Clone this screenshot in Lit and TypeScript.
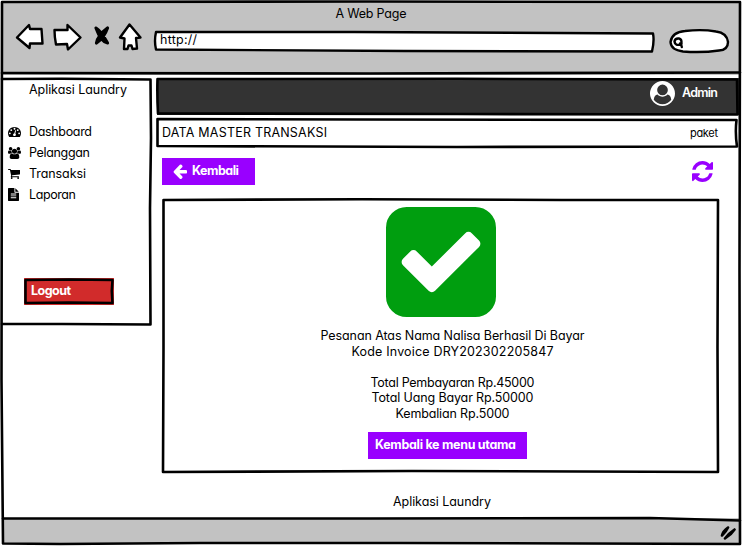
import { LitElement, html, css, svg } from "lit";
import { customElement, property } from "lit/decorators.js";

const ICONS: Record<string, { box: string; d: string }> = {
  dashboard: {
    box: "0 128 1792 1536",
    d: "M384 1152q0-53-37.5-90.5t-90.5-37.5-90.5 37.5-37.5 90.5 37.5 90.5 90.5 37.5 90.5-37.5 37.5-90.5zm192-448q0-53-37.5-90.5t-90.5-37.5-90.5 37.5-37.5 90.5 37.5 90.5 90.5 37.5 90.5-37.5 37.5-90.5zm428 481l101-382q6-26-7.5-48.5t-38.5-29.5-48 6.5-30 39.5l-101 382q-60 5-107 43.5t-63 98.5q-20 77 20 146t117 89 146-20 89-117q16-60-6-117t-72-91zm660-33q0-53-37.5-90.5t-90.5-37.5-90.5 37.5-37.5 90.5 37.5 90.5 90.5 37.5 90.5-37.5 37.5-90.5zm-640-640q0-53-37.5-90.5t-90.5-37.5-90.5 37.5-37.5 90.5 37.5 90.5 90.5 37.5 90.5-37.5 37.5-90.5zm448 192q0-53-37.5-90.5t-90.5-37.5-90.5 37.5-37.5 90.5 37.5 90.5 90.5 37.5 90.5-37.5 37.5-90.5zm320 448q0 261-141 483-19 29-54 29h-1402q-35 0-54-29-141-221-141-483 0-182 71-348t191-286 286-191 348-71 348 71 286 191 191 286 71 348z",
  },
  group: {
    box: "-64 0 1920 1792",
    d: "M529 896q-162 5-265 128h-134q-82 0-138-40.5t-56-118.5q0-353 124-353 6 0 43.5 21t97.5 42.5 119 21.5q67 0 133-23-5 37-5 66 0 139 81 256zm1071 637q0 120-73 189.5t-194 69.5h-874q-121 0-194-69.5t-73-189.5q0-53 3.5-103.5t14-109 26.5-108.5 43-97.5 62-81 85.5-53.5 111.5-20q10 0 43 21.5t73 48 107 48 135 21.5 135-21.5 107-48 73-48 43-21.5q61 0 111.5 20t85.5 53.5 62 81 43 97.5 26.5 108.5 14 109 3.5 103.5zm-1024-1277q0 106-75 181t-181 75-181-75-75-181 75-181 181-75 181 75 75 181zm704 384q0 159-112.5 271.5t-271.5 112.5-271.5-112.5-112.5-271.5 112.5-271.5 271.5-112.5 271.5 112.5 112.5 271.5zm576 225q0 78-56 118.5t-138 40.5h-134q-103-123-265-128 81-117 81-256 0-29-5-66 66 23 133 23 59 0 119-21.5t97.5-42.5 43.5-21q124 0 124 353zm-128-609q0 106-75 181t-181 75-181-75-75-181 75-181 181-75 181 75 75 181z",
  },
  cart: {
    box: "64 256 1664 1408",
    d: "M704 1536q0 52-38 90t-90 38-90-38-38-90 38-90 90-38 90 38 38 90zm896 0q0 52-38 90t-90 38-90-38-38-90 38-90 90-38 90 38 38 90zm128-1088v512q0 24-16.5 42.5t-40.5 21.5l-1044 122q13 60 13 70 0 16-24 64h920q26 0 45 19t19 45-19 45-45 19h-1024q-26 0-45-19t-19-45q0-11 8-31.5t16-36 21.5-40 15.5-29.5l-177-823h-204q-26 0-45-19t-19-45 19-45 45-19h256q16 0 28.5 6.5t19.5 15.5 13 24.5 8 26 5.5 29.5 4.5 26h1201q26 0 45 19t19 45z",
  },
  file: {
    box: "128 0 1536 1792",
    d: "M1596 476q14 14 28 36h-472v-472q22 14 36 28zm-476 164h544v1056q0 40-28 68t-68 28h-1344q-40 0-68-28t-28-68v-1600q0-40 28-68t68-28h800v544q0 40 28 68t68 28zm160 736v-64q0-14-9-23t-23-9h-704q-14 0-23 9t-9 23v64q0 14 9 23t23 9h704q14 0 23-9t9-23zm0-256v-64q0-14-9-23t-23-9h-704q-14 0-23 9t-9 23v64q0 14 9 23t23 9h704q14 0 23-9t9-23zm0-256v-64q0-14-9-23t-23-9h-704q-14 0-23 9t-9 23v64q0 14 9 23t23 9h704q14 0 23-9t9-23z",
  },
  back: {
    box: "128 128 1536 1600",
    d: "M1664 896v128q0 53-32.5 90.5t-84.5 37.5h-704l293 294q38 36 38 90t-38 90l-75 76q-37 37-90 37-52 0-91-37l-651-652q-37-37-37-90 0-52 37-91l651-650q38-38 91-38 52 0 90 38l75 74q38 38 38 91t-38 91l-293 293h704q52 0 84.5 37.5t32.5 90.5z",
  },
  refresh: {
    box: "128 128 1536 1536",
    d: "M1639 1056q0 5-1 7-64 268-268 434.5t-478 166.5q-146 0-282.5-55t-243.5-157l-129 129q-19 19-45 19t-45-19-19-45v-448q0-26 19-45t45-19h448q26 0 45 19t19 45-19 45l-137 137q71 66 161 102t187 36q134 0 250-65t186-179q11-17 53-117 8-23 30-23h192q13 0 22.5 9.5t9.5 22.5zm25-800v448q0 26-19 45t-45 19h-448q-26 0-45-19t-19-45 19-45l138-138q-148-137-349-137-134 0-250 65t-186 179q-11 17-53 117-8 23-30 23h-199q-13 0-22.5-9.5t-9.5-22.5v-7q65-268 270-434.5t480-166.5q146 0 284 55.5t245 156.5l130-129q19-19 45-19t45 19 19 45z",
  },
  check: {
    box: "128 128 1536 1536",
    d: "M813 1299l614-614q19-19 19-45t-19-45l-102-102q-19-19-45-19t-45 19l-467 467-211-211q-19-19-45-19t-45 19l-102 102q-19 19-19 45t19 45l358 358q19 19 45 19t45-19zm851-883v960q0 119-84.5 203.5t-203.5 84.5h-960q-119 0-203.5-84.5t-84.5-203.5v-960q0-119 84.5-203.5t203.5-84.5h960q119 0 203.5 84.5t84.5 203.5z",
  },
  user: {
    box: "0 0 1792 1792",
    d: "M1523 1339q-22-155-87.5-257.5t-184.5-118.5q-67 74-159.5 115.5t-195.5 41.5-195.5-41.5-159.5-115.5q-119 16-184.5 118.5t-87.5 257.5q106 150 271 237.5t356 87.5 356-87.5 271-237.5zm-243-699q0-159-112.5-271.5t-271.5-112.5-271.5 112.5-112.5 271.5 112.5 271.5 271.5 112.5 271.5-112.5 112.5-271.5zm512 256q0 182-71 347.5t-190.5 286-285.5 191.5-349 71-348.5-71-286-191-191-286-71.5-348 71-348 191-286 286-191 348-71 348 71 286 191 191 286 71 348z",
  },
};

const icon = (name: string, w: number, h: number) => html`
  <svg class="icon" width=${w} height=${h} viewBox=${ICONS[name].box} preserveAspectRatio="none" fill="currentColor">
    <path d=${ICONS[name].d} />
  </svg>
`;

/* Hand-drawn outline laid over the box that holds it. */
const outline = (w: number, h: number, ...paths: string[]) => html`
  <svg class="outline" width=${w} height=${h} viewBox="0 0 ${w} ${h}">
    ${paths.map((d) => svg`<path d=${d} />`)}
  </svg>
`;

/* One line of text whose tracking is spread to fill a set width. */
@customElement("fit-text")
export class FitText extends LitElement {
  @property({ type: Number }) width = 0;
  @property() text = "";

  static styles = css`
    :host {
      display: block;
      flex: none;
      white-space: pre;
    }
    .run {
      display: inline-block;
    }
  `;

  protected updated() {
    const run = this.renderRoot.querySelector(".run") as HTMLElement;
    run.style.letterSpacing = "0";
    const gap = (this.width - run.getBoundingClientRect().width) / (this.text.length - 1);
    run.style.letterSpacing = `${gap.toFixed(3)}px`;
    this.style.width = `${this.width}px`;
  }

  render() {
    return html`<span class="run">${this.text}</span>`;
  }
}

const text = (t: string, width: number) => html`<fit-text .text=${t} .width=${width}></fit-text>`;

@customElement("app-root")
export class AppRoot extends LitElement {
  static styles = css`
    :host {
      display: block;
      width: 742px;
      height: 546px;
      overflow: hidden;
      background: #fff;
      color: #000;
      font: 12.5px/18px Inter, "Noto Sans", sans-serif;
      font-feature-settings: "cv11", "calt" 0;
    }
    * {
      box-sizing: border-box;
    }
    .icon {
      display: block;
      flex: none;
    }
    .outline {
      position: absolute;
      left: 0;
      top: 0;
      overflow: visible;
      fill: none;
      stroke: #000;
      stroke-width: 2.6;
      stroke-linecap: round;
      stroke-linejoin: round;
      pointer-events: none;
    }
    .window {
      position: relative;
      display: flex;
      flex-direction: column;
      height: 546px;
    }
    .chrome {
      height: 73px;
      margin: 2px 2px 0;
      background: #c2c2c2;
      display: flex;
      flex-direction: column;
    }
    .title {
      display: flex;
      justify-content: center;
      padding: 3px 0 0;
    }
    .tools {
      display: flex;
      padding: 0 0 0 13px;
      margin-top: -3px;
    }
    .nav {
      display: block;
      flex: none;
      fill: #fff;
      stroke: #000;
      stroke-width: 2.4;
      stroke-linejoin: round;
      stroke-linecap: round;
    }
    .nav .cross {
      fill: #000;
      stroke-width: 3.2;
    }
    .address {
      position: relative;
      width: 500px;
      height: 20px;
      margin: 11px 0 0 7px;
      padding: 0 0 0 6px;
    }
    .address .outline,
    .search .outline {
      fill: #fff;
      stroke-width: 2.4;
    }
    .address fit-text {
      position: relative;
    }
    .search {
      position: relative;
      width: 60px;
      height: 24px;
      margin: 9px 0 0 15px;
    }
    .body {
      display: flex;
      height: 443px;
      padding: 3px 3px 0 2px;
    }
    .sidebar {
      position: relative;
      width: 149px;
      height: 247px;
      padding: 3px 0 0 6px;
      background: #fff;
    }
    .brand {
      padding-left: 21px;
      margin-bottom: 22px;
    }
    .item {
      display: flex;
      align-items: center;
      height: 21px;
    }
    .glyph {
      width: 21px;
      display: flex;
    }
    .logout {
      position: relative;
      display: flex;
      width: 90px;
      height: 27px;
      margin: 73px 0 0 16px;
      padding: 4px 0 0 7px;
      background: #d12b2b;
      color: #fff;
      font-weight: 700;
    }
    .main {
      width: 582px;
      margin-left: 6px;
      flex: none;
    }
    .topbar {
      position: relative;
      display: flex;
      justify-content: flex-end;
      height: 37px;
      padding: 3px 21px 0 0;
      background: #333;
      color: #fff;
      font-weight: 600;
    }
    .topbar fit-text {
      margin: 3px 0 0 7px;
    }
    .crumbs {
      position: relative;
      display: flex;
      justify-content: space-between;
      height: 30px;
      margin-top: 3px;
      padding: 6px 21px 0 5px;
    }
    .small {
      font-size: 11px;
    }
    .actions {
      display: flex;
      justify-content: space-between;
      align-items: flex-start;
      padding: 10px 26px 0 5px;
    }
    .button {
      display: flex;
      height: 27px;
      background: #9900ff;
      color: #fff;
      font-weight: 700;
    }
    .back {
      width: 93px;
      padding: 4px 0 0 11px;
      gap: 5px;
    }
    .back .icon {
      margin-top: 2px;
    }
    .refresh {
      color: #9900ff;
      padding-top: 3px;
    }
    .panel {
      position: relative;
      display: flex;
      flex-direction: column;
      align-items: center;
      width: 557px;
      height: 275px;
      margin: 13px 0 0 5px;
      padding: 9px 0 0;
      line-height: 15.6px;
    }
    .done {
      color: #009e0f;
    }
    .lines {
      display: flex;
      flex-direction: column;
      align-items: center;
      margin: 11px 0 0 24px;
    }
    .space {
      height: 15.6px;
    }
    .home {
      width: 159px;
      margin: 10px 0 0 14px;
      padding: 5px 0 0 7px;
    }
    .credit {
      padding: 20px 0 0 236px;
    }
    .status {
      height: 26px;
      margin: 0 2px;
      background: #c2c2c2;
      display: flex;
      justify-content: flex-end;
      padding: 8px 3px 0 0;
    }
    .grip {
      fill: none;
      stroke: #000;
      stroke-width: 2.6;
      stroke-linecap: round;
      stroke-linejoin: round;
    }
  `;

  private items: [string, string, number, number, number][] = [
    ["dashboard", "Dashboard", 63, 13, 11],
    ["group", "Pelanggan", 61, 13, 12],
    ["cart", "Transaksi", 57, 12, 10],
    ["file", "Laporan", 47, 11, 13],
  ];

  render() {
    return html`
      <div class="window">
        <div class="chrome">
          <div class="title">${text("A Web Page", 71)}</div>
          <div class="tools">
            <svg class="nav" width="132" height="34" viewBox="15 20 132 34">
              <path d="M17 37.500L29 25L30 29L41.500 29L42.500 43.500L30 43.500L29.500 48Z" />
              <path d="M54.500 30L67.500 30L67.500 25L80.500 37.500L68 49.500L67 44L56 44.500Q54.500 37 54.500 30Z" />
              <path class="cross" d="M96 28Q101 31 107.500 43Q101 42 96 28ZM107.500 28Q104 38 96.500 43Q98 35 107.500 28Z" />
              <path d="M129.500 24.500L120 37.500L124.500 38.500L124 49L127.500 49L128.500 45.500L131.500 45.500L132.500 49L137 48.500L136 38L140.500 37.500Z" />
            </svg>
            <div class="address">
              ${outline(500, 20, "M2 1L200 1L499 2.500Q500.500 10 498 20.500L250 20L2 18.500Q0 10 2 1Z")}
              ${text("http://", 37)}
            </div>
            <div class="search">
              ${outline(
                60,
                24,
                "M1.500 13Q3 3 16 2Q33 0 47 2.500Q58 4 59 13Q59 21 50 21.500Q33 24 14 22.500Q2 21 1.500 13Z",
                "M11.500 15.500Q6 17 5.500 12.500Q6 9 10 9.500Q13 10 12.500 15L11 14.500M12 15L12.800 18",
              )}
            </div>
          </div>
        </div>

        <div class="body">
          <div class="sidebar">
            <div class="brand">${text("Aplikasi Laundry", 98)}</div>
            ${this.items.map(
              ([name, label, width, w, h]) => html`
                <div class="item">
                  <span class="glyph">${icon(name, w, h)}</span>
                  ${text(label, width)}
                </div>
              `,
            )}
            <div class="logout">
              ${text("Logout", 40)}
              ${outline(90, 27, "M1.500 2L45 1.500L88.500 2L87.800 13L88.500 25L45 24.500L1.500 25Z")}
            </div>
            ${outline(149, 247, "M0 1L60 .8L148.500 1.500L149 60L148 130L148.500 246.500L60 246L0 246")}
          </div>

          <div class="main">
            <div class="topbar">
              ${icon("user", 25, 25)} ${text("Admin", 36)}
              ${outline(582, 37, "M.5 1L300 .8L580 1.500L580.500 36.500L300 36L1 35.500Q0 18 .5 1Z")}
            </div>
            <div class="crumbs">
              ${text("DATA MASTER TRANSAKSI", 165)}
              <span class="small">${text("paket", 28)}</span>
              ${outline(582, 30, "M.5 1L200 1.500L579.500 2Q578 15 580 28.500L300 29L.5 28Z")}
            </div>
            <div class="actions">
              <div class="button back">${icon("back", 14, 15)} ${text("Kembali", 47)}</div>
              <div class="refresh">${icon("refresh", 21, 21)}</div>
            </div>
            <div class="panel">
              <div class="done">${icon("check", 110, 110)}</div>
              <div class="lines">
                ${text("Pesanan Atas Nama Nalisa Berhasil Di Bayar", 264)}
                ${text("Kode Invoice DRY202302205847", 202)}
                <div class="space"></div>
                ${text("Total Pembayaran Rp.45000", 164)}
                ${text("Total Uang Bayar Rp.50000", 162)}
                ${text("Kembalian Rp.5000", 114)}
              </div>
              <div class="button home">${text("Kembali ke menu utama", 141)}</div>
              ${outline(557, 275, "M1.500 2L200 1.200L400 2L556 2L555.500 150L556 274L250 273L1 274L1.500 150Z")}
            </div>
            <div class="credit">${text("Aplikasi Laundry", 98)}</div>
          </div>
        </div>

        <div class="status">
          <svg class="grip" width="17" height="14" viewBox="0 0 17 14">
            <path d="M8 1.500Q3 5 2 9.500Q6 6 8 1.500M14.500 3.500Q9 7 5 12.500Q11 9 14.500 3.500" />
          </svg>
        </div>
        ${outline(
          742,
          546,
          "M2 2L370 1.500L740 2L739.500 270L740 544L400 543L200 543L60 544L3 543.500L1.500 380Z",
          "M2 73L370 73.500L740 72.500",
          "M3 518.500L370 518.500L650 518L740 520.500",
        )}
      </div>
    `;
  }
}
